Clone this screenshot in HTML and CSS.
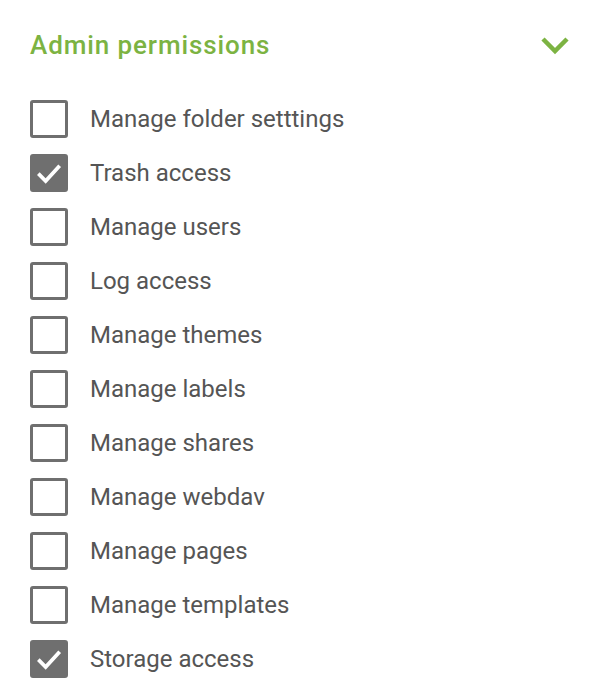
FILE: index.html
```html
<!DOCTYPE html>
<html lang="en">
<head>
  <meta charset="UTF-8" />
  <title>Admin permissions</title>
  <link rel="stylesheet" href="styles.css">
</head>
<body>
  <div class="panel">
    <div class="header">
      <h2>Admin permissions</h2>
      <svg class="chevron" width="30" height="20" viewBox="0 0 30 20">
        <path d="M3 4 L15 16 L27 4" fill="none" stroke="#7cb342" stroke-width="4.5" />
      </svg>
    </div>
    <ul class="perms">
      <li><span class="box"></span>Manage folder setttings</li>
      <li><span class="box checked"><svg viewBox="0 0 24 24"><path d="M4 12.5 L9.5 18 L20 6.5" /></svg></span>Trash access</li>
      <li><span class="box"></span>Manage users</li>
      <li><span class="box"></span>Log access</li>
      <li><span class="box"></span>Manage themes</li>
      <li><span class="box"></span>Manage labels</li>
      <li><span class="box"></span>Manage shares</li>
      <li><span class="box"></span>Manage webdav</li>
      <li><span class="box"></span>Manage pages</li>
      <li><span class="box"></span>Manage templates</li>
      <li><span class="box checked"><svg viewBox="0 0 24 24"><path d="M4 12.5 L9.5 18 L20 6.5" /></svg></span>Storage access</li>
    </ul>
  </div>
</body>
</html>
```

FILE: styles.css
```css
* { box-sizing: border-box; }
html, body {
  margin: 0; padding: 0;
  background: #fff;
  font-family: Roboto, "Noto Sans", sans-serif;
}
.panel { padding: 24px 20px 0 30px; }
.header {
  display: flex; align-items: center; justify-content: space-between;
  height: 42px;
}
.header h2 {
  margin: 0; font-size: 26px; font-weight: 500; color: #7cb342;
  letter-spacing: 0.9px;
}
.perms {
  list-style: none; margin: 34px 0 0; padding: 0;
  display: flex; flex-direction: column; gap: 16px;
}
.perms li {
  display: flex; align-items: center; gap: 22px;
  height: 38px;
  font-size: 24px; color: #555;
}
.box {
  width: 38px; height: 38px; flex: none;
  border: 3px solid #6f6f6f; border-radius: 3px;
  display: flex; align-items: center; justify-content: center;
}
.box.checked { background: #6f6f6f; }
.box svg { width: 32px; height: 32px; }
.box path { fill: none; stroke: #fff; stroke-width: 2.8; }
```
